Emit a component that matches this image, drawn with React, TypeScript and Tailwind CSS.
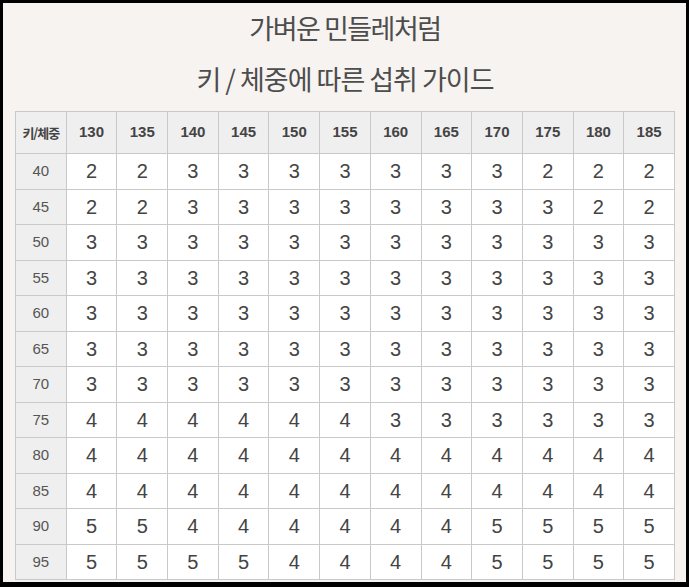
const WEIGHTS = [130, 135, 140, 145, 150, 155, 160, 165, 170, 175, 180, 185];

const ROWS: { h: number; v: number[] }[] = [
  { h: 40, v: [2, 2, 3, 3, 3, 3, 3, 3, 3, 2, 2, 2] },
  { h: 45, v: [2, 2, 3, 3, 3, 3, 3, 3, 3, 3, 2, 2] },
  { h: 50, v: [3, 3, 3, 3, 3, 3, 3, 3, 3, 3, 3, 3] },
  { h: 55, v: [3, 3, 3, 3, 3, 3, 3, 3, 3, 3, 3, 3] },
  { h: 60, v: [3, 3, 3, 3, 3, 3, 3, 3, 3, 3, 3, 3] },
  { h: 65, v: [3, 3, 3, 3, 3, 3, 3, 3, 3, 3, 3, 3] },
  { h: 70, v: [3, 3, 3, 3, 3, 3, 3, 3, 3, 3, 3, 3] },
  { h: 75, v: [4, 4, 4, 4, 4, 4, 3, 3, 3, 3, 3, 3] },
  { h: 80, v: [4, 4, 4, 4, 4, 4, 4, 4, 4, 4, 4, 4] },
  { h: 85, v: [4, 4, 4, 4, 4, 4, 4, 4, 4, 4, 4, 4] },
  { h: 90, v: [5, 5, 4, 4, 4, 4, 4, 4, 5, 5, 5, 5] },
  { h: 95, v: [5, 5, 5, 5, 4, 4, 4, 4, 5, 5, 5, 5] },
];

export default function App() {
  return (
    <div className="w-[689px] h-[587px] bg-black pt-[3px] px-[3px] pb-[5px]">
      <div
        className="h-full bg-[#f7f3f0] pl-[12px] pr-[11px]"
        style={{ fontFamily: '"Liberation Sans", "Noto Sans CJK KR", sans-serif' }}
      >
        <div
          className="h-[50px] leading-[50px] text-center text-[27px] text-[#4d4d4d] tracking-[-1.5px]"
          style={{ fontFamily: '"Noto Sans CJK KR", sans-serif' }}
        >
          가벼운 민들레처럼
        </div>
        <div
          className="h-[52px] leading-[52px] text-center text-[27px] text-[#4d4d4d] tracking-[-1px]"
          style={{ fontFamily: '"Noto Sans CJK KR", sans-serif' }}
        >
          키 / 체중에 따른 섭취 가이드
        </div>
        <table className="mt-[6px] w-[660px] table-fixed border-collapse">
          <thead>
            <tr className="h-[42px]">
              <th
                className="border-[1.5px] border-[#c9c9c9] bg-[#efefef] text-[13px] font-bold text-[#444] tracking-[-1px]"
                style={{ fontFamily: '"Noto Sans CJK KR", sans-serif' }}
              >
                키/체중
              </th>
              {WEIGHTS.map((w) => (
                <th
                  key={w}
                  className="border-[1.5px] border-[#c9c9c9] bg-[#efefef] text-[15px] font-bold text-[#444]"
                >
                  {w}
                </th>
              ))}
            </tr>
          </thead>
          <tbody>
            {ROWS.map((r) => (
              <tr key={r.h} className="h-[35.5px]">
                <td className="border-[1.5px] border-[#c9c9c9] bg-[#efefef] text-center text-[15px] text-[#555]">
                  {r.h}
                </td>
                {r.v.map((n, i) => (
                  <td
                    key={i}
                    className="border-[1.5px] border-[#c9c9c9] bg-white text-center text-[20px] text-[#444]"
                  >
                    {n}
                  </td>
                ))}
              </tr>
            ))}
          </tbody>
        </table>
      </div>
    </div>
  );
}
